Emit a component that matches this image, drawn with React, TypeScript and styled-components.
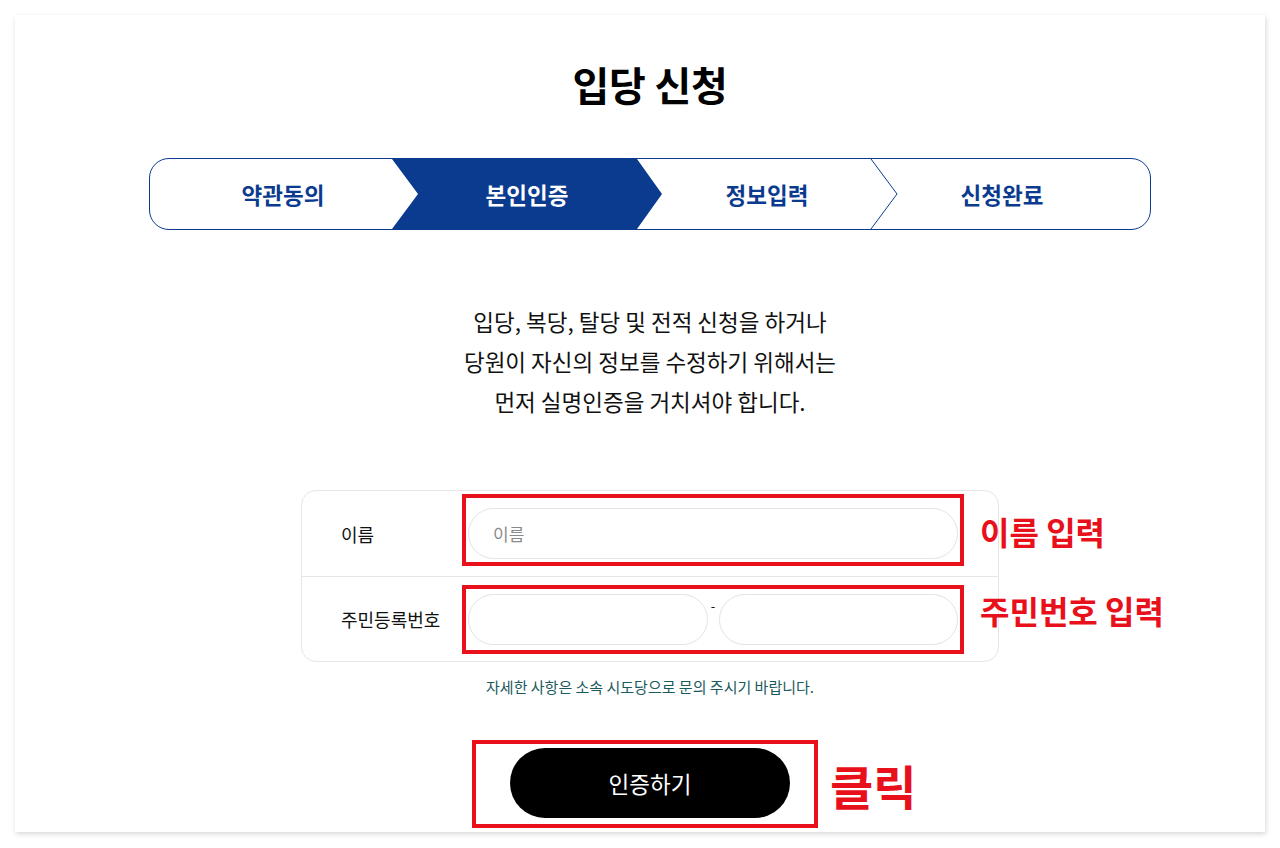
import React from 'react';
import styled, { createGlobalStyle } from 'styled-components';

const NAVY = '#0b3b8f';
const RED = '#e8101a';

const GlobalStyle = createGlobalStyle`
  html, body {
    margin: 0;
    padding: 0;
    background: #fff;
  }
  body {
    font-family: "Noto Sans CJK KR", "Noto Sans", sans-serif;
    color: #111;
  }
  * {
    box-sizing: border-box;
  }
`;

const Card = styled.div`
  margin: 15px;
  width: 1250px;
  height: 817px;
  background: #fff;
  box-shadow: 1px 2px 5px rgba(0, 0, 0, 0.16);
  padding: 46px 114px 0 134px;
  display: flex;
  flex-direction: column;
  align-items: center;
`;

const Title = styled.h1`
  margin: 0;
  font-size: 40px;
  line-height: 46px;
  font-weight: 700;
  color: #000;
  letter-spacing: -0.3px;
`;

const Stepper = styled.div`
  position: relative;
  margin-top: 51px;
  width: 1002px;
  height: 72px;
  border: 1px solid ${NAVY};
  border-radius: 20px;
  overflow: hidden;
  display: flex;
`;

const StepShapes = styled.svg`
  position: absolute;
  inset: 0;
  width: 100%;
  height: 100%;
`;

const Step = styled.div<{ $w: number; $active?: boolean }>`
  position: relative;
  flex: 0 0 ${(p) => p.$w}px;
  display: flex;
  align-items: center;
  justify-content: center;
  font-size: 22.5px;
  font-weight: 700;
  color: ${(p) => (p.$active ? '#fff' : NAVY)};
`;

const Description = styled.p`
  margin: 71px 0 0;
  text-align: center;
  font-size: 22.5px;
  line-height: 40px;
  color: #111;
`;

const FormBox = styled.div`
  margin-top: 69px;
  width: 698px;
  border: 1px solid #e6e6e6;
  border-radius: 15px;
`;

const Row = styled.div`
  display: flex;
  align-items: center;
  height: 85px;
  padding-right: 40px;

  & + & {
    border-top: 1px solid #e6e6e6;
  }
`;

const Label = styled.div`
  flex: 0 0 166px;
  padding-left: 39px;
  font-size: 18px;
  color: #111;
`;

const InputCell = styled.div`
  position: relative;
  flex: 1;
  display: flex;
  align-items: center;
`;

const TextInput = styled.input`
  flex: 1;
  min-width: 0;
  height: 51px;
  border: 1px solid #e3e3e3;
  border-radius: 26px;
  padding: 0 24px;
  font-family: inherit;
  font-size: 17px;
  color: #111;
  background: #fff;
  outline: none;

  &::placeholder {
    color: #8a8a8a;
  }
`;

const Dash = styled.span`
  flex: 0 0 11px;
  align-self: flex-start;
  margin-top: 2px;
  text-align: center;
  font-size: 13px;
  line-height: 20px;
  color: #111;
`;

const Note = styled.p`
  margin: 15px 0 0;
  font-size: 15px;
  line-height: 20px;
  color: #1b5a5c;
`;

const ButtonWrap = styled.div`
  position: relative;
  margin-top: 51px;
`;

const SubmitButton = styled.button`
  width: 280px;
  height: 70px;
  border: none;
  border-radius: 35px;
  background: #000;
  color: #fff;
  font-family: inherit;
  font-size: 22.5px;
  cursor: pointer;
`;

const AnnotBox = styled.div<{ $t: number; $r: number; $b: number; $l: number }>`
  position: absolute;
  top: ${(p) => p.$t}px;
  right: ${(p) => p.$r}px;
  bottom: ${(p) => p.$b}px;
  left: ${(p) => p.$l}px;
  border: 4px solid ${RED};
  pointer-events: none;
`;

const AnnotLabel = styled.span<{ $size: number; $gap: number; $dy: number }>`
  position: absolute;
  left: calc(100% + ${(p) => p.$gap}px);
  top: 50%;
  transform: translateY(calc(-50% + ${(p) => p.$dy}px));
  white-space: nowrap;
  font-size: ${(p) => p.$size}px;
  line-height: 1;
  font-weight: 700;
  color: ${RED};
`;

const steps = [
  { label: '약관동의', w: 266 },
  { label: '본인인증', w: 222, active: true },
  { label: '정보입력', w: 258 },
  { label: '신청완료', w: 212 },
];

export default function App() {
  return (
    <>
      <GlobalStyle />
      <Card>
        <Title>입당 신청</Title>

        <Stepper>
          <StepShapes viewBox="0 0 1000 70" preserveAspectRatio="none">
            <polygon points="242,0 487,0 512,35 487,70 242,70 268,35" fill={NAVY} />
            <polyline
              points="721,0 747,35 721,70"
              fill="none"
              stroke={NAVY}
              strokeWidth="1"
              vectorEffect="non-scaling-stroke"
            />
          </StepShapes>
          {steps.map((s) => (
            <Step key={s.label} $w={s.w} $active={s.active}>
              {s.label}
            </Step>
          ))}
        </Stepper>

        <Description>
          입당, 복당, 탈당 및 전적 신청을 하거나
          <br />
          당원이 자신의 정보를 수정하기 위해서는
          <br />
          먼저 실명인증을 거치셔야 합니다.
        </Description>

        <FormBox>
          <Row>
            <Label>이름</Label>
            <InputCell>
              <TextInput placeholder="이름" />
              <AnnotBox $t={-14} $r={-6} $b={-7} $l={-6} />
              <AnnotLabel $size={32} $gap={22} $dy={-3}>
                이름 입력
              </AnnotLabel>
            </InputCell>
          </Row>
          <Row>
            <Label>주민등록번호</Label>
            <InputCell>
              <TextInput />
              <Dash>-</Dash>
              <TextInput />
              <AnnotBox $t={-9} $r={-6} $b={-9} $l={-6} />
              <AnnotLabel $size={32} $gap={22} $dy={-9}>
                주민번호 입력
              </AnnotLabel>
            </InputCell>
          </Row>
        </FormBox>

        <Note>자세한 사항은 소속 시도당으로 문의 주시기 바랍니다.</Note>

        <ButtonWrap>
          <SubmitButton>인증하기</SubmitButton>
          <AnnotBox $t={-8} $r={-28} $b={-10} $l={-38} />
          <AnnotLabel $size={47} $gap={40} $dy={1}>
            클릭
          </AnnotLabel>
        </ButtonWrap>
      </Card>
    </>
  );
}
